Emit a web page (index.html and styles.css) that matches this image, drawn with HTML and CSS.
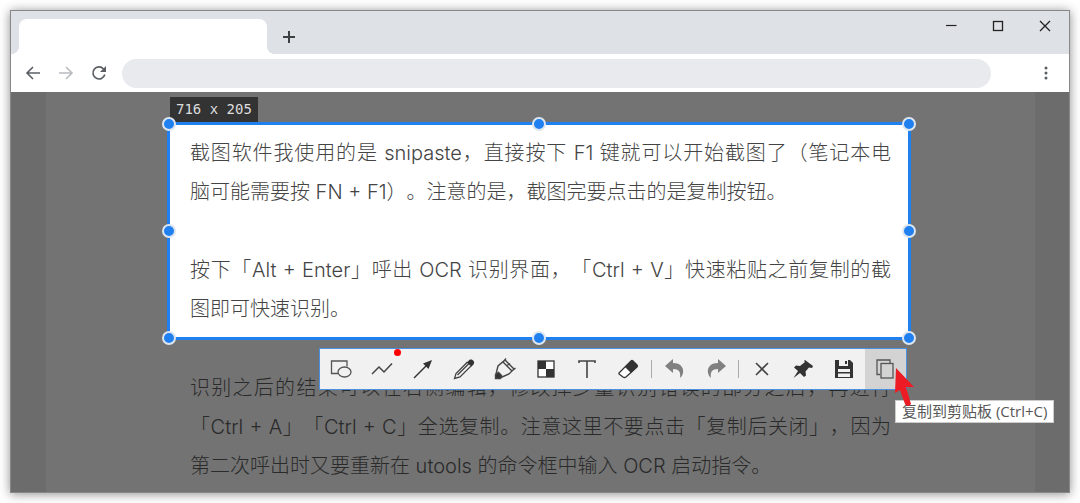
FILE: index.html
```html
<!DOCTYPE html>
<html lang="zh-CN">
<head>
    <meta charset="UTF-8">
    <meta name="viewport" content="width=device-width, initial-scale=1.0">
    <title>截图</title>
    <link rel="stylesheet" href="styles.css">
</head>
<body>
    <div class="window">
        <header class="tab-strip">
            <div class="tab"></div>
            <button class="new-tab" aria-label="新标签页">
                <svg width="14" height="14" viewBox="0 0 14 14"><path d="M7 1v12M1 7h12" stroke="#3c4043" stroke-width="2"/></svg>
            </button>
            <div class="window-buttons">
                <button aria-label="最小化"><svg width="12" height="12" viewBox="0 0 12 12"><path d="M1 5.500h10.500" stroke="#222" stroke-width="1.200"/></svg></button>
                <button aria-label="最大化"><svg width="12" height="12" viewBox="0 0 12 12"><rect x="1.500" y="1.500" width="9" height="9" fill="none" stroke="#222" stroke-width="1.300"/></svg></button>
                <button aria-label="关闭"><svg width="12" height="12" viewBox="0 0 12 12"><path d="M1 1l10 10M11 1L1 11" stroke="#222" stroke-width="1.300"/></svg></button>
            </div>
        </header>
        <nav class="nav-bar">
            <button aria-label="后退"><svg width="16" height="16" viewBox="0 0 16 16" fill="none" stroke="#5a5e63" stroke-width="1.600"><path d="M15 8H2M8 2L2 8l6 6"/></svg></button>
            <button aria-label="前进"><svg width="16" height="16" viewBox="0 0 16 16" fill="none" stroke="#b9bbbe" stroke-width="1.600"><path d="M1 8h13M8 2l6 6-6 6"/></svg></button>
            <button aria-label="刷新"><svg width="16" height="16" viewBox="0 0 16 16" fill="none" stroke="#5a5e63" stroke-width="1.700"><path d="M13.800 9.500A6 6 0 1 1 12.500 4"/><path d="M15 1v6H9z" fill="#5a5e63" stroke="none"/></svg></button>
            <input class="address" type="text" aria-label="地址栏">
            <button class="menu" aria-label="菜单"><svg width="4" height="14" viewBox="0 0 4 14" fill="#5a5e63"><circle cx="2" cy="2" r="1.500"/><circle cx="2" cy="7" r="1.500"/><circle cx="2" cy="12" r="1.500"/></svg></button>
        </nav>
        <main class="page">
            <article class="article">
                <section class="selection">
                    <p><span class="full-line">截图软件我使用的是 snipaste，直接按下 F1 键就可以开始截图了（笔记本电</span>脑可能需要按 FN + F1）。注意的是，截图完要点击的是复制按钮。</p>
                    <p>按下「Alt + Enter」呼出 OCR 识别界面，「Ctrl + V」快速粘贴之前复制的截图即可快速识别。</p>
                    <span class="size">716 x 205</span>
                    <i class="handle top left"></i>
                    <i class="handle top center"></i>
                    <i class="handle top right"></i>
                    <i class="handle middle left"></i>
                    <i class="handle middle right"></i>
                    <i class="handle bottom left"></i>
                    <i class="handle bottom center"></i>
                    <i class="handle bottom right"></i>
                    <div class="tools">
                        <button aria-label="形状"><svg viewBox="0 0 24 24" fill="none" stroke="#555" stroke-width="1.300"><path d="M9 16.500H2.500V4h15.500v5.500"/><ellipse cx="15.500" cy="15" rx="6.500" ry="5"/></svg></button>
                        <button class="active-dot" aria-label="折线"><svg viewBox="0 0 24 24" fill="none" stroke="#444" stroke-width="1.500"><path d="M2 17l7-7 5 5L22 6.500"/></svg></button>
                        <button aria-label="箭头"><svg viewBox="0 0 24 24"><path d="M3 21L16 8" stroke="#333" stroke-width="1.500"/><path d="M21 3l-3.500 9-5.500-5.500z" fill="#333"/></svg></button>
                        <button aria-label="铅笔"><svg viewBox="0 0 24 24" fill="none" stroke="#444" stroke-width="1.300"><path d="M15.500 5L4 16.500l-1.500 5 5.500-1.500L19.500 8.500M5.500 18L17 6.500"/><path d="M16.500 4c2-3.500 7.500 0 5 3.500l-2 2-5-4z" fill="#333" stroke="none"/></svg></button>
                        <button aria-label="马克笔"><svg viewBox="0 0 24 24" fill="none" stroke="#444" stroke-width="1.400"><path d="M3 17l2-8 7-6 9 9-5 5-8 3.500M10 5l9 9M13 1.500l-2.500 3M22.500 11l-3 2.500M14 8.500l3-2"/><path d="M2.500 17.500l3-2 3 3-1 3H2.500z" fill="#333"/></svg></button>
                        <button aria-label="马赛克"><svg viewBox="0 0 24 24"><rect x="4" y="4" width="16" height="16" fill="#fff" stroke="#333" stroke-width="1.300"/><path d="M4 4h8v8H4zM12 12h8v8h-8z" fill="#333"/></svg></button>
                        <button aria-label="文字"><svg viewBox="0 0 24 24"><path d="M4 6V4h16v2M12 4v17" fill="none" stroke="#444" stroke-width="1.600"/></svg></button>
                        <button aria-label="橡皮擦"><svg viewBox="0 0 24 24"><path d="M3 16l12-12q1-1 2 0l4 4q1 1 0 2L10 20q-1.500 1-3 0l-4-3z" fill="#fff" stroke="#333" stroke-width="1.300"/><path d="M9 10l6-6q1-1 2 0l4 4q1 1 0 2l-6 6z" fill="#333"/></svg></button>
                        <span class="divider"></span>
                        <button aria-label="撤销"><svg viewBox="0 0 24 24"><path d="M2 9l8-7v4c8 0 11 5 10 10q-.5 3-3 5c1-6-1-9-7-9v4z" fill="#808080"/></svg></button>
                        <button aria-label="重做"><svg viewBox="0 0 24 24"><path d="M22 9l-8-7v4C6 6 3 11 4 16q.5 3 3 5c-1-6 1-9 7-9v4z" fill="#808080"/></svg></button>
                        <span class="divider"></span>
                        <button aria-label="取消"><svg viewBox="0 0 24 24"><path d="M6 6l12 12M18 6L6 18" stroke="#444" stroke-width="1.600"/></svg></button>
                        <button aria-label="贴到屏幕"><svg viewBox="0 0 24 24"><path d="M14 3l8 6-1 2-3-.5-3.500 4 .5 4-2 1.500-4-4-6.500 5L7 14l-4-3.500L5 8.500l4 .5 5-4-1-1z" fill="#333"/></svg></button>
                        <button aria-label="保存"><svg viewBox="0 0 24 24"><path d="M3 3h15l3 3v15H3z" fill="#333"/><path d="M7 3h9v6H7zM6 12h12v8H6z" fill="#f1f1f1"/><path d="M13 4h2v3h-2zM6 15h12v1.500H6z" fill="#333"/></svg></button>
                        <button class="copy" aria-label="复制"><svg viewBox="0 0 24 24" fill="none" stroke="#555" stroke-width="1.300"><path d="M7 17.500H4V3h13v3"/><rect x="8" y="6.500" width="12" height="14.500"/></svg></button>
                        <span class="tooltip">复制到剪贴板 (Ctrl+C)</span>
                        <svg class="pointer" width="20" height="40" viewBox="0 0 20 40"><path d="M1 0l18 19-8 0 5 17q-3 4-6 0L5 22l-5 3z" fill="#ed1c24"/></svg>
                    </div>
                </section>
                <p class="after">识别之后的结果可以在右侧编辑，修改掉少量识别错误的部分之后，再进行「Ctrl + A」「Ctrl + C」全选复制。注意这里不要点击「复制后关闭」，因为第二次呼出时又要重新在 utools 的命令框中输入 OCR 启动指令。</p>
            </article>
        </main>
    </div>
</body>
</html>
```
FILE: styles.css
```css
* {
    box-sizing: border-box;
}
body {
    margin: 0;
    padding: 10px;
    background: #fff;
    font-family: "Inter", "Noto Sans CJK SC", sans-serif;
}
button {
    display: flex;
    align-items: center;
    justify-content: center;
    padding: 0;
    border: none;
    background: none;
}
.window {
    border: 1px solid #888;
    background: #fff;
    box-shadow: 0 1px 10px rgba(0,0,0,0.45);
}

/* Tab strip */
.tab-strip {
    display: flex;
    height: 43px;
    padding: 0 1px 0 8px;
    background: #dee1e6;
}
.tab {
    position: relative;
    width: 248px;
    margin-top: 8px;
    border-radius: 8px 8px 0 0;
    background: #fff;
}
.tab::before,
.tab::after {
    content: "";
    position: absolute;
    bottom: 0;
    width: 8px;
    height: 8px;
}
.tab::before {
    right: 100%;
    background: radial-gradient(circle at 0 0, #dee1e6 8px, #fff 8px);
}
.tab::after {
    left: 100%;
    background: radial-gradient(circle at 100% 0, #dee1e6 8px, #fff 8px);
}
.new-tab {
    width: 44px;
    padding-top: 8px;
}
.window-buttons {
    display: flex;
    margin-left: auto;
}
.window-buttons button {
    width: 47px;
    height: 30px;
}
.nav-bar {
    display: flex;
    align-items: center;
    height: 38px;
    padding: 0 7px 0 5px;
}
.nav-bar button {
    width: 33px;
    height: 33px;
}
.address {
    flex: 1;
    min-width: 0;
    height: 29px;
    margin: 0 38px 0 7px;
    padding: 0 15px;
    border: none;
    border-radius: 15px;
    background: #e8eaed;
}

/* Page under the dark capture mask */
.page {
    padding: 0 34px 0 35px;
    background: #6c6c6c;
}
.article {
    padding: 30px 124px 6px 121px;
    background: #737373;
    color: #2a2a2a;
    font-size: 20px;
    font-weight: 300;
    line-height: 39px;
    text-align: justify;
    text-spacing-trim: space-all;
}
.article p {
    margin: 0;
}
.article .after {
    padding: 29px 20px 0 23px;
}
.full-line {
    display: block;
    text-align-last: justify;
}
.selection {
    position: relative;
    padding: 9px 17px 8px 20px;
    border: 3px solid #2080f0;
    background: #fff;
    color: #444;
}
.selection p + p {
    margin-top: 39px;
}
.size {
    position: absolute;
    left: 0;
    bottom: calc(100% + 3px);
    padding: 0 6px;
    background: #333;
    color: #ddd;
    font: 14px/25px "DejaVu Sans Mono", monospace;
}
.handle {
    position: absolute;
    width: 14px;
    height: 14px;
    border: 2px solid #dde6f0;
    border-radius: 50%;
    background: #2080f0;
}
.top { top: -8px; }
.middle { top: calc(50% - 7px); }
.bottom { bottom: -8px; }
.left { left: -8px; }
.center { left: calc(50% - 7px); }
.right { right: -8px; }

/* Toolbar */
.tools {
    position: absolute;
    top: calc(100% + 11px);
    right: 1px;
    display: flex;
    align-items: center;
    justify-content: space-between;
    width: 588px;
    height: 42px;
    border: 1px solid #4a90e2;
    background: #f1f1f1;
}
.tools button {
    position: relative;
    width: 41px;
    height: 40px;
}
.tools button svg {
    width: 24px;
    height: 24px;
}
.active-dot::after {
    content: "";
    position: absolute;
    top: 0;
    right: 1px;
    width: 7px;
    height: 7px;
    border-radius: 50%;
    background: #f00;
}
.divider {
    width: 1px;
    height: 18px;
    margin: 0 2px;
    background: #aaa;
}
.tools .copy {
    background: #d3d3d3;
}
.tooltip {
    position: absolute;
    top: 51px;
    left: 575px;
    padding: 0 6px;
    border: 1px solid #ccc;
    background: #fff;
    color: #575757;
    font: 15px/21px "Open Sans", "Noto Sans CJK SC", sans-serif;
    white-space: nowrap;
}
.pointer {
    position: absolute;
    top: 19px;
    left: 575px;
}
```
